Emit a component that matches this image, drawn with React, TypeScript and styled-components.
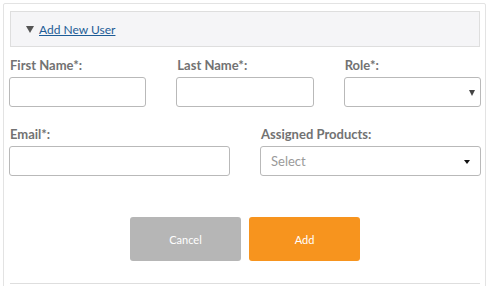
import React from "react";
import styled, { createGlobalStyle } from "styled-components";

const GlobalStyle = createGlobalStyle`
  html, body {
    margin: 0;
    padding: 0;
    background: #ffffff;
    font-family: Lato, "Open Sans", Arial, sans-serif;
  }
`;

const App: React.FC = () => {
  return (
    <>
      <GlobalStyle />
      <Page>
        <Card>
          <Header>
            <Caret />
            <HeaderLink href="#">Add New User</HeaderLink>
          </Header>
          <Grid $cols={3}>
            <Field>
              <Label>First Name*:</Label>
              <Input type="text" />
            </Field>
            <Field>
              <Label>Last Name*:</Label>
              <Input type="text" />
            </Field>
            <Field>
              <Label>Role*:</Label>
              <SelectBox $pad={5}>
                <Arrow $small />
              </SelectBox>
            </Field>
          </Grid>
          <Grid $cols={2} $top={19}>
            <Field>
              <Label>Email*:</Label>
              <Input type="text" />
            </Field>
            <Field>
              <Label>Assigned Products:</Label>
              <SelectBox>
                <Placeholder>Select</Placeholder>
                <Arrow />
              </SelectBox>
            </Field>
          </Grid>
          <Actions>
            <Button $variant="cancel">Cancel</Button>
            <Button $variant="add">Add</Button>
          </Actions>
          <Divider />
        </Card>
      </Page>
    </>
  );
};

export default App;

const Page = styled.div`
  width: 492px;
  height: 286px;
  overflow: hidden;
  padding: 3px 0 0 3px;
  box-sizing: border-box;
`;

const Card = styled.div`
  width: 483px;
  height: 300px;
  box-sizing: border-box;
  border: 1px solid #e3e3e3;
  border-radius: 2px;
  padding: 7px 4px 0 5px;
`;

const Header = styled.div`
  height: 36px;
  box-sizing: border-box;
  margin: 0 0 0 1px;
  width: 470px;
  background: #f5f5f7;
  border: 1px solid #dedede;
  display: flex;
  align-items: center;
  padding: 1px 0 0 15px;
`;

const Caret = styled.span`
  width: 0;
  height: 0;
  border-left: 4px solid transparent;
  border-right: 4px solid transparent;
  border-top: 7px solid #555555;
  margin-right: 5px;
  margin-top: -1px;
`;

const HeaderLink = styled.a`
  font-size: 12px;
  color: #1d5c96;
  text-decoration: underline;
`;

const Grid = styled.div<{ $cols: number; $top?: number }>`
  display: grid;
  grid-template-columns: repeat(${(p) => p.$cols}, minmax(0, 1fr));
  column-gap: 30px;
  width: 472px;
  margin-top: ${(p) => p.$top ?? 10}px;
`;

const Field = styled.div`
  display: flex;
  flex-direction: column;
  min-width: 0;
`;

const Label = styled.label`
  font-size: 13px;
  font-weight: 700;
  color: #727272;
  line-height: 16px;
  margin-bottom: 4px;
  padding-left: 1px;
`;

const Input = styled.input`
  width: 100%;
  min-width: 0;
  height: 30px;
  box-sizing: border-box;
  border: 1px solid #b9b9b9;
  border-radius: 3px;
  background: #ffffff;
  padding: 0 8px;
  outline: none;
  font-family: inherit;
`;

const SelectBox = styled.div<{ $pad?: number }>`
  height: 30px;
  box-sizing: border-box;
  border: 1px solid #b9b9b9;
  border-radius: 3px;
  background: #ffffff;
  display: flex;
  align-items: center;
  justify-content: space-between;
  padding: 0 ${(p) => p.$pad ?? 10}px 0 10px;
`;

const Placeholder = styled.span`
  font-size: 13px;
  color: #9a9a9a;
`;

const Arrow = styled.span<{ $small?: boolean }>`
  margin-left: auto;
  width: 0;
  height: 0;
  border-left: 3.5px solid transparent;
  border-right: 3.5px solid transparent;
  border-top: ${(p) => (p.$small ? 6 : 4)}px solid ${(p) => (p.$small ? "#444" : "#111")};
  margin-top: 2px;
`;

const Actions = styled.div`
  display: flex;
  justify-content: center;
  gap: 8px;
  width: 472px;
  margin-top: 41px;
`;

const Button = styled.button<{ $variant: "cancel" | "add" }>`
  width: 111px;
  height: 44px;
  border: none;
  border-radius: 3px;
  color: #ffffff;
  font-family: inherit;
  font-size: 11px;
  background: ${(p) => (p.$variant === "add" ? "#f7941e" : "#b6b6b6")};
`;

const Divider = styled.div`
  width: 470px;
  margin: 22px 0 0 1px;
  border-top: 1px solid #dedede;
`;
